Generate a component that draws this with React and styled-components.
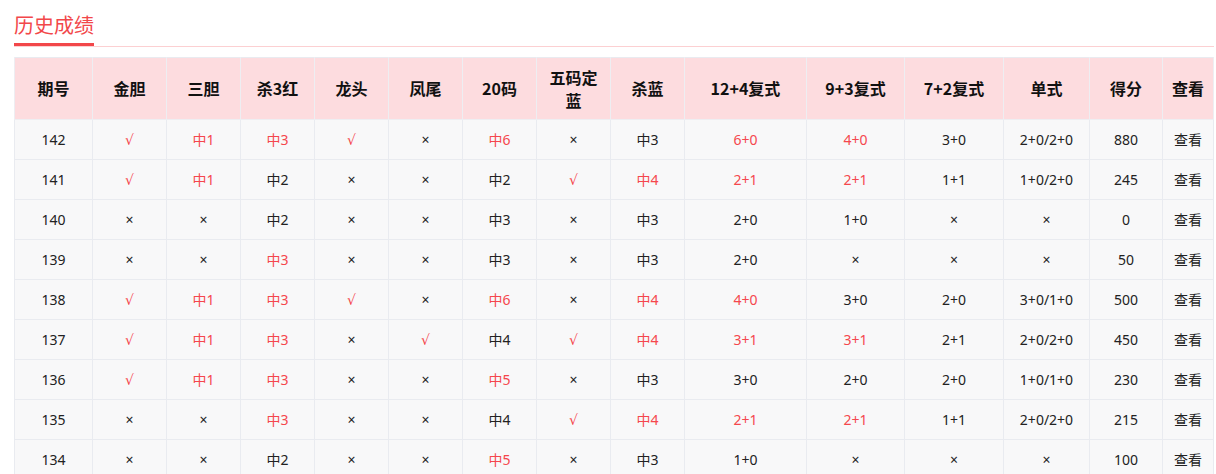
import styled, { createGlobalStyle } from "styled-components";

const GlobalStyle = createGlobalStyle`
  body {
    margin: 0;
    background: #ffffff;
    font-family: "Noto Sans CJK SC", "Noto Sans", sans-serif;
    color: #222;
  }
`;

const Page = styled.div`
  padding: 0 2px 0 14px;
`;

const TitleBar = styled.div`
  display: flex;
  border-bottom: 1px solid #fcd0d2;
  margin-bottom: 10px;
  padding-top: 10px;
`;

const Tab = styled.span`
  font-size: 20px;
  line-height: 30px;
  color: #f2474a;
  padding-bottom: 3px;
  border-bottom: 3px solid #f2474a;
`;

const Table = styled.table`
  width: 1200px;
  table-layout: fixed;
  border-collapse: collapse;
  border: 1px solid #e9ebf0;
`;

const Th = styled.th`
  background: #fddcdf;
  height: 61px;
  padding: 0 6px;
  font-size: 16px;
  font-weight: 700;
  line-height: 23px;
  color: #111;
  text-align: center;
  border: 1px solid #eeeef2;
  border-top: none;
`;

const Td = styled.td`
  box-sizing: border-box;
  background: #f8f8f9;
  height: 40px;
  padding: 0 0 1px;
  font-family: "Noto Sans", "DejaVu Sans", "Noto Sans CJK SC", sans-serif;
  font-size: 14px;
  text-align: center;
  color: ${(p) => (p.$red ? "#f5474d" : "#222")};
  border: 1px solid #e9ebf0;
`;

const widths = [78, 74, 74, 74, 74, 74, 74, 74, 74, 122, 98, 99, 86, 73, 51];

const headers = [
  "期号", "金胆", "三胆", "杀3红", "龙头", "凤尾", "20码", "五码定蓝",
  "杀蓝", "12+4复式", "9+3复式", "7+2复式", "单式", "得分", "查看",
];

// "!" prefix marks a hit shown in red
const rows = [
  ["142", "!√", "!中1", "!中3", "!√", "×", "!中6", "×", "中3", "!6+0", "!4+0", "3+0", "2+0/2+0", "880"],
  ["141", "!√", "!中1", "中2", "×", "×", "中2", "!√", "!中4", "!2+1", "!2+1", "1+1", "1+0/2+0", "245"],
  ["140", "×", "×", "中2", "×", "×", "中3", "×", "中3", "2+0", "1+0", "×", "×", "0"],
  ["139", "×", "×", "!中3", "×", "×", "中3", "×", "中3", "2+0", "×", "×", "×", "50"],
  ["138", "!√", "!中1", "!中3", "!√", "×", "!中6", "×", "!中4", "!4+0", "3+0", "2+0", "3+0/1+0", "500"],
  ["137", "!√", "!中1", "!中3", "×", "!√", "中4", "!√", "!中4", "!3+1", "!3+1", "2+1", "2+0/2+0", "450"],
  ["136", "!√", "!中1", "!中3", "×", "×", "!中5", "×", "中3", "3+0", "2+0", "2+0", "1+0/1+0", "230"],
  ["135", "×", "×", "!中3", "×", "×", "中4", "!√", "!中4", "!2+1", "!2+1", "1+1", "2+0/2+0", "215"],
  ["134", "×", "×", "中2", "×", "×", "!中5", "×", "中3", "1+0", "×", "×", "×", "100"],
];

export default function App() {
  return (
    <>
      <GlobalStyle />
      <Page>
        <TitleBar>
          <Tab>历史成绩</Tab>
        </TitleBar>
        <Table>
          <colgroup>
            {widths.map((w, i) => (
              <col key={i} style={{ width: w }} />
            ))}
          </colgroup>
          <thead>
            <tr>
              {headers.map((h) => (
                <Th key={h}>{h}</Th>
              ))}
            </tr>
          </thead>
          <tbody>
            {rows.map((r) => (
              <tr key={r[0]}>
                {r.map((c, i) => {
                  const red = c.startsWith("!");
                  return (
                    <Td key={i} $red={red}>
                      {red ? c.slice(1) : c}
                    </Td>
                  );
                })}
                <Td>查看</Td>
              </tr>
            ))}
          </tbody>
        </Table>
      </Page>
    </>
  );
}
